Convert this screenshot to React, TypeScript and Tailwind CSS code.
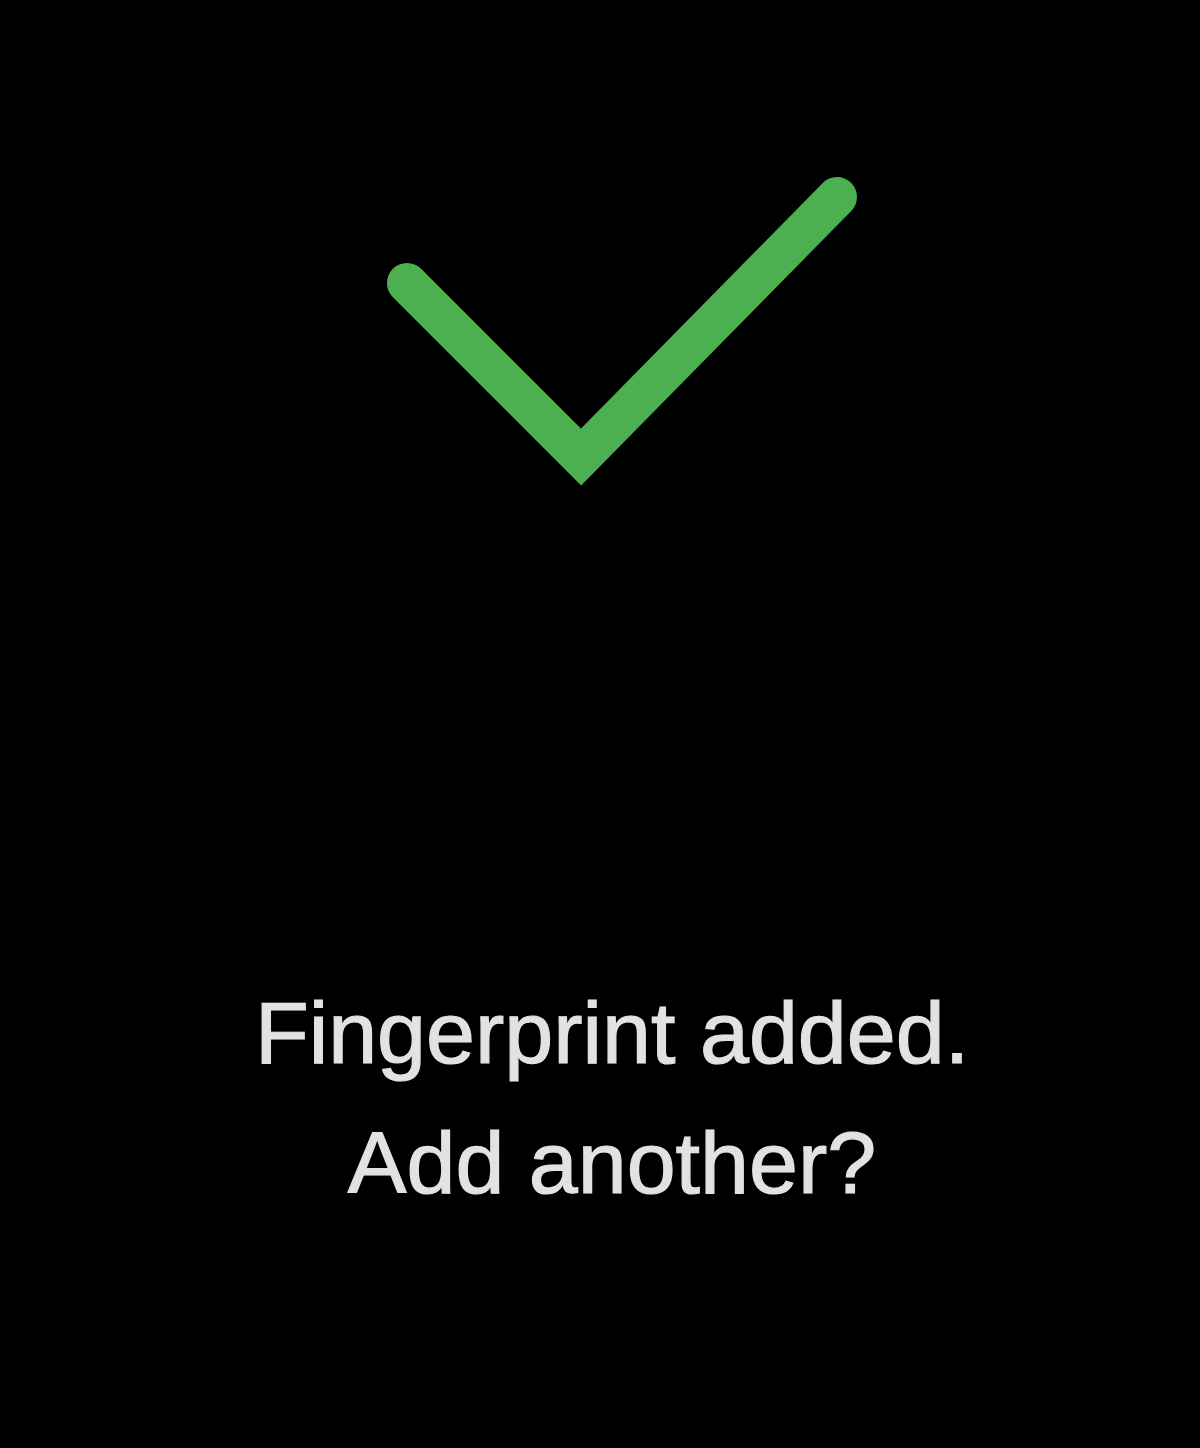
export default function App() {
  return (
    <div className="flex h-[1448px] w-full flex-col items-center bg-black pl-[24px] pt-[170px]">
      <svg width="520" height="330" viewBox="0 0 520 330" fill="none" aria-hidden="true" className="overflow-visible">
        <path
          d="M55 113 L229 287 L485 27"
          stroke="#4caf50"
          strokeWidth="40"
          strokeLinecap="round"
          strokeLinejoin="miter"
        />
      </svg>
      <p
        className="mt-[468px] text-center text-[88px] leading-[130px] text-[#e2e2e2] [-webkit-text-stroke:1.2px_#e2e2e2]"
        style={{ fontFamily: '"Liberation Sans", Arial, sans-serif' }}
      >
        Fingerprint added.
        <br />
        Add another?
      </p>
    </div>
  );
}
